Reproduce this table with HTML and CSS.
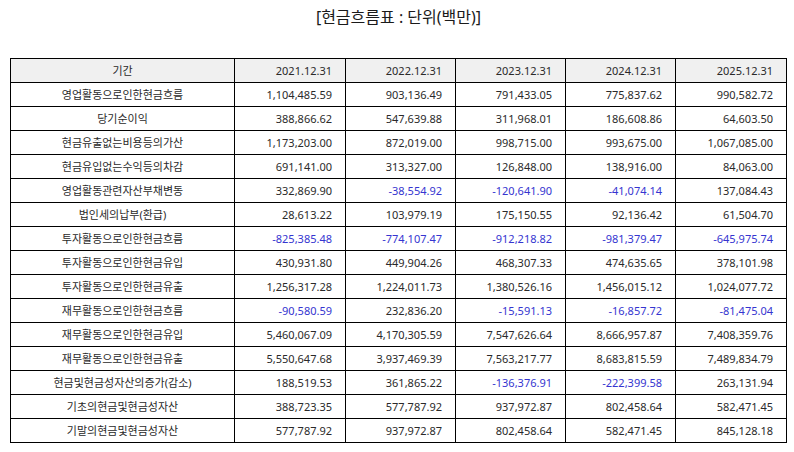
FILE: index.html
```html
<!DOCTYPE html>
<html lang="ko">
<head>
<meta charset="utf-8">
<title>현금흐름표</title>
<link rel="stylesheet" href="styles.css">
</head>
<body>
<div class="page">
  <h1 class="title">[현금흐름표 : 단위(백만)]</h1>
  <table class="cf">
    <thead>
      <tr><th class="lbl w-label">기간</th><th class="w-wide">2021.12.31</th><th class="w-num">2022.12.31</th><th class="w-num">2023.12.31</th><th class="w-num">2024.12.31</th><th class="w-wide">2025.12.31</th></tr>
    </thead>
    <tbody>
      <tr><td class="lbl">영업활동으로인한현금흐름</td><td>1,104,485.59</td><td>903,136.49</td><td>791,433.05</td><td>775,837.62</td><td>990,582.72</td></tr>
      <tr><td class="lbl">당기순이익</td><td>388,866.62</td><td>547,639.88</td><td>311,968.01</td><td>186,608.86</td><td>64,603.50</td></tr>
      <tr><td class="lbl">현금유출없는비용등의가산</td><td>1,173,203.00</td><td>872,019.00</td><td>998,715.00</td><td>993,675.00</td><td>1,067,085.00</td></tr>
      <tr><td class="lbl">현금유입없는수익등의차감</td><td>691,141.00</td><td>313,327.00</td><td>126,848.00</td><td>138,916.00</td><td>84,063.00</td></tr>
      <tr><td class="lbl">영업활동관련자산부채변동</td><td>332,869.90</td><td class="neg">-38,554.92</td><td class="neg">-120,641.90</td><td class="neg">-41,074.14</td><td>137,084.43</td></tr>
      <tr><td class="lbl">법인세의납부(환급)</td><td>28,613.22</td><td>103,979.19</td><td>175,150.55</td><td>92,136.42</td><td>61,504.70</td></tr>
      <tr><td class="lbl">투자활동으로인한현금흐름</td><td class="neg">-825,385.48</td><td class="neg">-774,107.47</td><td class="neg">-912,218.82</td><td class="neg">-981,379.47</td><td class="neg">-645,975.74</td></tr>
      <tr><td class="lbl">투자활동으로인한현금유입</td><td>430,931.80</td><td>449,904.26</td><td>468,307.33</td><td>474,635.65</td><td>378,101.98</td></tr>
      <tr><td class="lbl">투자활동으로인한현금유출</td><td>1,256,317.28</td><td>1,224,011.73</td><td>1,380,526.16</td><td>1,456,015.12</td><td>1,024,077.72</td></tr>
      <tr><td class="lbl">재무활동으로인한현금흐름</td><td class="neg">-90,580.59</td><td>232,836.20</td><td class="neg">-15,591.13</td><td class="neg">-16,857.72</td><td class="neg">-81,475.04</td></tr>
      <tr><td class="lbl">재무활동으로인한현금유입</td><td>5,460,067.09</td><td>4,170,305.59</td><td>7,547,626.64</td><td>8,666,957.87</td><td>7,408,359.76</td></tr>
      <tr><td class="lbl">재무활동으로인한현금유출</td><td>5,550,647.68</td><td>3,937,469.39</td><td>7,563,217.77</td><td>8,683,815.59</td><td>7,489,834.79</td></tr>
      <tr><td class="lbl">현금및현금성자산의증가(감소)</td><td>188,519.53</td><td>361,865.22</td><td class="neg">-136,376.91</td><td class="neg">-222,399.58</td><td>263,131.94</td></tr>
      <tr><td class="lbl">기초의현금및현금성자산</td><td>388,723.35</td><td>577,787.92</td><td>937,972.87</td><td>802,458.64</td><td>582,471.45</td></tr>
      <tr><td class="lbl">기말의현금및현금성자산</td><td>577,787.92</td><td>937,972.87</td><td>802,458.64</td><td>582,471.45</td><td>845,128.18</td></tr>
    </tbody>
  </table>
</div>
</body>
</html>
```
FILE: styles.css
```css
html, body {
  margin: 0;
  padding: 0;
  background: #ffffff;
}
body {
  font-family: "Noto Sans", "Noto Sans CJK KR", sans-serif;
  color: #2a2a2a;
}
.page {
  padding: 0 7px 0 10px;
}
.title {
  margin: 7px 0 0;
  font-size: 16px;
  font-weight: normal;
  line-height: 20px;
  text-align: center;
  color: #1a1a1a;
}
.cf {
  margin-top: 31px;
  width: 777px;
  table-layout: fixed;
  border-collapse: separate;
  border-spacing: 0;
  border-top: 1px solid #000000;
  border-left: 1px solid #000000;
  font-size: 11px;
}
.w-label { width: 224px; }
.w-wide { width: 111px; }
.w-num { width: 110px; }
.cf th,
.cf td {
  box-sizing: border-box;
  border-right: 1px solid #000000;
  border-bottom: 1px solid #000000;
  height: 24px;
  padding: 0 13px 0 4px;
  text-align: right;
  font-weight: normal;
  white-space: nowrap;
  line-height: 14px;
}
.cf thead th {
  background: #f0f0f0;
}
.cf .lbl {
  text-align: center;
  padding: 0 4px;
}
.cf .neg {
  color: #3535d0;
}
```
